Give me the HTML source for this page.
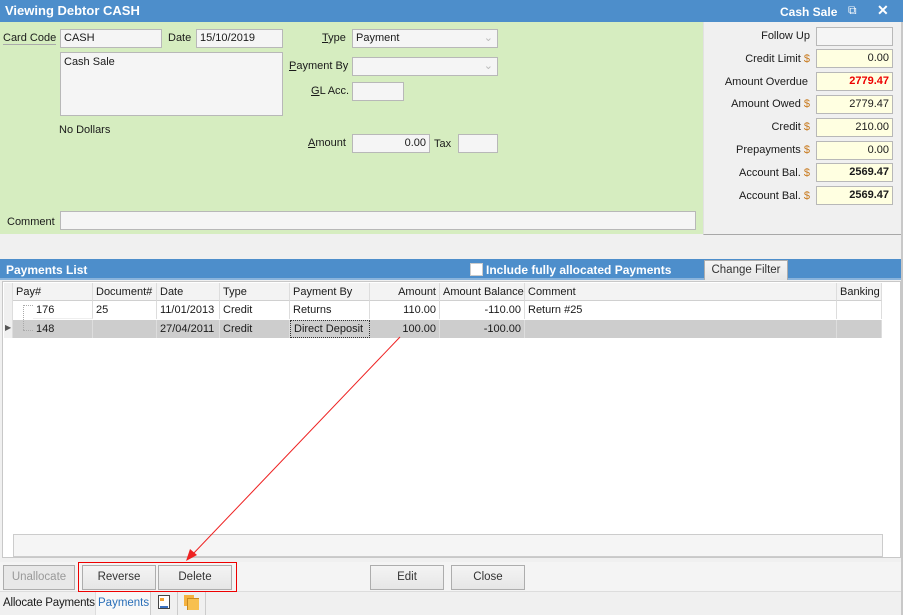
<!DOCTYPE html>
<html><head><style>
*{box-sizing:border-box;margin:0;padding:0}
body{width:903px;height:615px;position:relative;background:#f0f0f0;font-family:"Liberation Sans",sans-serif;font-size:11px;color:#1a1a1a;overflow:hidden}
.a{position:absolute}
.box{position:absolute;border:1px solid #b8b8b8;background:#f5f5f5;height:19px;padding:0 3px;line-height:17px;white-space:nowrap}
.y{background:#ffffe1;text-align:right}
.lbl{position:absolute;white-space:nowrap}
.r{text-align:right}
.btn{position:absolute;border:1px solid #adadad;background:linear-gradient(#f4f4f4,#e6e6e6);height:25px;text-align:center;line-height:23px;font-size:11.5px;color:#333}
.cell{position:absolute;height:18px;border-right:1px solid #ddd;padding:0 3px;line-height:18px;white-space:nowrap}
.hc{background:#f3f3f3;border-bottom:1px solid #d0d0d0}
u{text-decoration:underline}
</style></head><body>
<div class="a" style="left:0;top:0;width:903px;height:22px;background:#4d8ecb"></div>
<div class="lbl" style="left:5px;top:3px;color:#fff;font-weight:bold;font-size:13px">Viewing Debtor CASH</div>
<div class="lbl" style="left:780px;top:5px;color:#fff;font-weight:bold;font-size:12px">Cash Sale</div>
<div class="lbl" style="left:848px;top:3px;color:#fff;font-size:12px">&#x29C9;</div>
<div class="lbl" style="left:877px;top:2px;color:#fff;font-size:14px;font-weight:bold">✕</div>
<div class="a" style="left:0;top:22px;width:703px;height:212px;background:#d6edc0"></div>
<div class="a" style="left:703px;top:22px;width:200px;height:213px;border-left:1px solid #e2e2e2;border-bottom:1px solid #a8a8a8;background:#f0f0f0"></div>
<div class="a" style="left:901px;top:22px;width:2px;height:593px;background:#c8c8c8"></div>
<div class="lbl" style="left:3px;top:32px;border-bottom:1px solid #aaa">Card Code</div>
<div class="box" style="left:60px;top:29px;width:102px">CASH</div>
<div class="lbl" style="left:168px;top:32px">Date</div>
<div class="box" style="left:196px;top:29px;width:87px">15/10/2019</div>
<div class="box" style="left:60px;top:52px;width:223px;height:64px;padding-top:1px">Cash Sale</div>
<div class="lbl" style="left:59px;top:124px">No Dollars</div>
<div class="lbl" style="left:322px;top:32px"><u>T</u>ype</div>
<div class="box" style="left:352px;top:29px;width:146px">Payment<span style="position:absolute;right:4px;top:0;color:#bbb">&#8964;</span></div>
<div class="lbl" style="left:289px;top:60px"><u>P</u>ayment By</div>
<div class="box" style="left:352px;top:57px;width:146px"><span style="position:absolute;right:4px;top:0;color:#bbb">&#8964;</span></div>
<div class="lbl" style="left:311px;top:85px"><u>G</u>L Acc.</div>
<div class="box" style="left:352px;top:82px;width:52px"></div>
<div class="lbl" style="left:308px;top:137px"><u>A</u>mount</div>
<div class="box y" style="left:352px;top:134px;width:78px;background:#f5f5f5">0.00</div>
<div class="lbl" style="left:434px;top:138px">Tax</div>
<div class="box" style="left:458px;top:134px;width:40px"></div>
<div class="lbl" style="left:7px;top:216px">Comment</div>
<div class="box" style="left:60px;top:211px;width:636px"></div>
<div class="lbl r" style="left:703px;top:30px;width:107px">Follow Up</div>
<div class="box" style="left:816px;top:27px;width:77px"></div>
<div class="lbl r" style="left:703px;top:53px;width:107px">Credit Limit <span style="color:#c87a1e">$</span></div>
<div class="box y" style="left:816px;top:49px;width:77px">0.00</div>
<div class="lbl r" style="left:703px;top:76px;width:105px">Amount Overdue</div>
<div class="box y" style="left:816px;top:72px;width:77px;color:#e00;font-weight:bold">2779.47</div>
<div class="lbl r" style="left:703px;top:98px;width:107px">Amount Owed <span style="color:#c87a1e">$</span></div>
<div class="box y" style="left:816px;top:95px;width:77px">2779.47</div>
<div class="lbl r" style="left:703px;top:121px;width:107px">Credit <span style="color:#c87a1e">$</span></div>
<div class="box y" style="left:816px;top:118px;width:77px">210.00</div>
<div class="lbl r" style="left:703px;top:144px;width:107px">Prepayments <span style="color:#c87a1e">$</span></div>
<div class="box y" style="left:816px;top:141px;width:77px">0.00</div>
<div class="lbl r" style="left:703px;top:167px;width:107px">Account Bal. <span style="color:#c87a1e">$</span></div>
<div class="box y" style="left:816px;top:163px;width:77px;font-weight:bold">2569.47</div>
<div class="lbl r" style="left:703px;top:190px;width:107px">Account Bal. <span style="color:#c87a1e">$</span></div>
<div class="box y" style="left:816px;top:186px;width:77px;font-weight:bold">2569.47</div>
<div class="a" style="left:0;top:259px;width:901px;height:21px;background:#4d8ecb;border-bottom:2px solid #8ab4dc"></div>
<div class="lbl" style="left:6px;top:263px;color:#fff;font-weight:bold;font-size:12px">Payments List</div>
<div class="a" style="left:470px;top:263px;width:13px;height:13px;background:#fff;border:1px solid #ccc"></div>
<div class="lbl" style="left:486px;top:263px;color:#fff;font-weight:bold;font-size:12px">Include fully allocated Payments</div>
<div class="btn" style="left:704px;top:260px;width:84px;height:20px;line-height:18px;border-bottom:none">Change Filter</div>
<div class="a" style="left:2px;top:281px;width:899px;height:277px;background:#fff;border:1px solid #c8c8c8"></div>
<div class="a" style="left:4px;top:283px;width:9px;height:55px;background:#f0f0f0;border-right:1px solid #ddd"></div>
<div class="lbl" style="left:5px;top:323px;font-size:8px;color:#555">&#9654;</div>
<div class="a" style="left:13px;top:320px;width:869px;height:18px;background:#cdcdcd"></div>
<div class="cell hc" style="left:13px;top:283px;width:80px">Pay#</div>
<div class="cell hc" style="left:93px;top:283px;width:64px">Document#</div>
<div class="cell hc" style="left:157px;top:283px;width:63px">Date</div>
<div class="cell hc" style="left:220px;top:283px;width:70px">Type</div>
<div class="cell hc" style="left:290px;top:283px;width:80px">Payment By</div>
<div class="cell hc r" style="left:370px;top:283px;width:70px">Amount</div>
<div class="cell hc r" style="left:440px;top:283px;width:85px">Amount Balance</div>
<div class="cell hc" style="left:525px;top:283px;width:312px">Comment</div>
<div class="cell hc" style="left:837px;top:283px;width:45px">Banking</div>
<div class="a" style="left:23px;top:305px;width:1px;height:25px;border-left:1px dotted #aaa"></div>
<div class="a" style="left:23px;top:305px;width:10px;border-top:1px dotted #aaa"></div>
<div class="a" style="left:23px;top:330px;width:10px;border-top:1px dotted #aaa"></div>
<div class="cell" style="left:33px;top:301px;width:60px;border-bottom:1px solid #eee">176</div>
<div class="cell" style="left:93px;top:301px;width:64px">25</div>
<div class="cell" style="left:157px;top:301px;width:63px">11/01/2013</div>
<div class="cell" style="left:220px;top:301px;width:70px">Credit</div>
<div class="cell" style="left:290px;top:301px;width:80px">Returns</div>
<div class="cell r" style="left:370px;top:301px;width:70px">110.00</div>
<div class="cell r" style="left:440px;top:301px;width:85px">-110.00</div>
<div class="cell" style="left:525px;top:301px;width:312px">Return #25</div>
<div class="cell" style="left:837px;top:301px;width:45px"></div>
<div class="cell" style="left:33px;top:320px;width:60px">148</div>
<div class="cell" style="left:93px;top:320px;width:64px"></div>
<div class="cell" style="left:157px;top:320px;width:63px">27/04/2011</div>
<div class="cell" style="left:220px;top:320px;width:70px">Credit</div>
<div class="cell" style="left:290px;top:320px;width:80px;border:1px dotted #333;line-height:16px">Direct Deposit</div>
<div class="cell r" style="left:370px;top:320px;width:70px">100.00</div>
<div class="cell r" style="left:440px;top:320px;width:85px">-100.00</div>
<div class="cell" style="left:525px;top:320px;width:312px"></div>
<div class="cell" style="left:837px;top:320px;width:45px"></div>
<div class="a" style="left:13px;top:534px;width:870px;height:23px;background:#f5f5f5;border:1px solid #ccc"></div>
<div class="a" style="left:0;top:562px;width:901px;height:30px;background:#f4f4f4;border-bottom:1px solid #ddd"></div>
<div class="btn" style="left:3px;top:565px;width:72px;color:#999;background:#e8e8e8">Unallocate</div>
<div class="btn" style="left:82px;top:565px;width:74px">Reverse</div>
<div class="btn" style="left:158px;top:565px;width:74px">Delete</div>
<div class="a" style="left:78px;top:562px;width:159px;height:30px;border:1px solid #e00"></div>
<div class="btn" style="left:370px;top:565px;width:74px">Edit</div>
<div class="btn" style="left:451px;top:565px;width:74px">Close</div>
<div class="lbl" style="left:3px;top:597px;font-size:11.5px;letter-spacing:-0.2px">Allocate Payments</div>
<div class="a" style="left:95px;top:592px;width:56px;height:23px;background:#f8f8f8;border-right:1px solid #ccc;border-left:1px solid #ddd"></div>
<div class="lbl" style="left:98px;top:597px;font-size:11.5px;color:#2a6fb8">Payments</div>
<div class="a" style="left:151px;top:592px;width:27px;height:23px;border-right:1px solid #ccc"></div>
<div class="a" style="left:158px;top:595px;width:12px;height:14px;border:1px solid #444;background:#fff"></div>
<div class="a" style="left:160px;top:598px;width:4px;height:3px;background:#f0a030"></div>
<div class="a" style="left:160px;top:606px;width:8px;height:2px;background:#3a70c0"></div>
<div class="a" style="left:178px;top:592px;width:28px;height:23px;border-right:1px solid #ccc"></div>
<div class="a" style="left:184px;top:595px;width:10px;height:11px;background:#f5b240"></div>
<div class="a" style="left:187px;top:598px;width:12px;height:12px;background:#f7c050;border-left:1px solid #c88a20;border-top:1px solid #c88a20"></div>
<svg class="a" style="left:0;top:0" width="903" height="615"><line x1="400" y1="337" x2="192" y2="555" stroke="#e22" stroke-width="1"/><polygon points="186,561 190,549 197,555" fill="#e22"/></svg>
</body></html>
